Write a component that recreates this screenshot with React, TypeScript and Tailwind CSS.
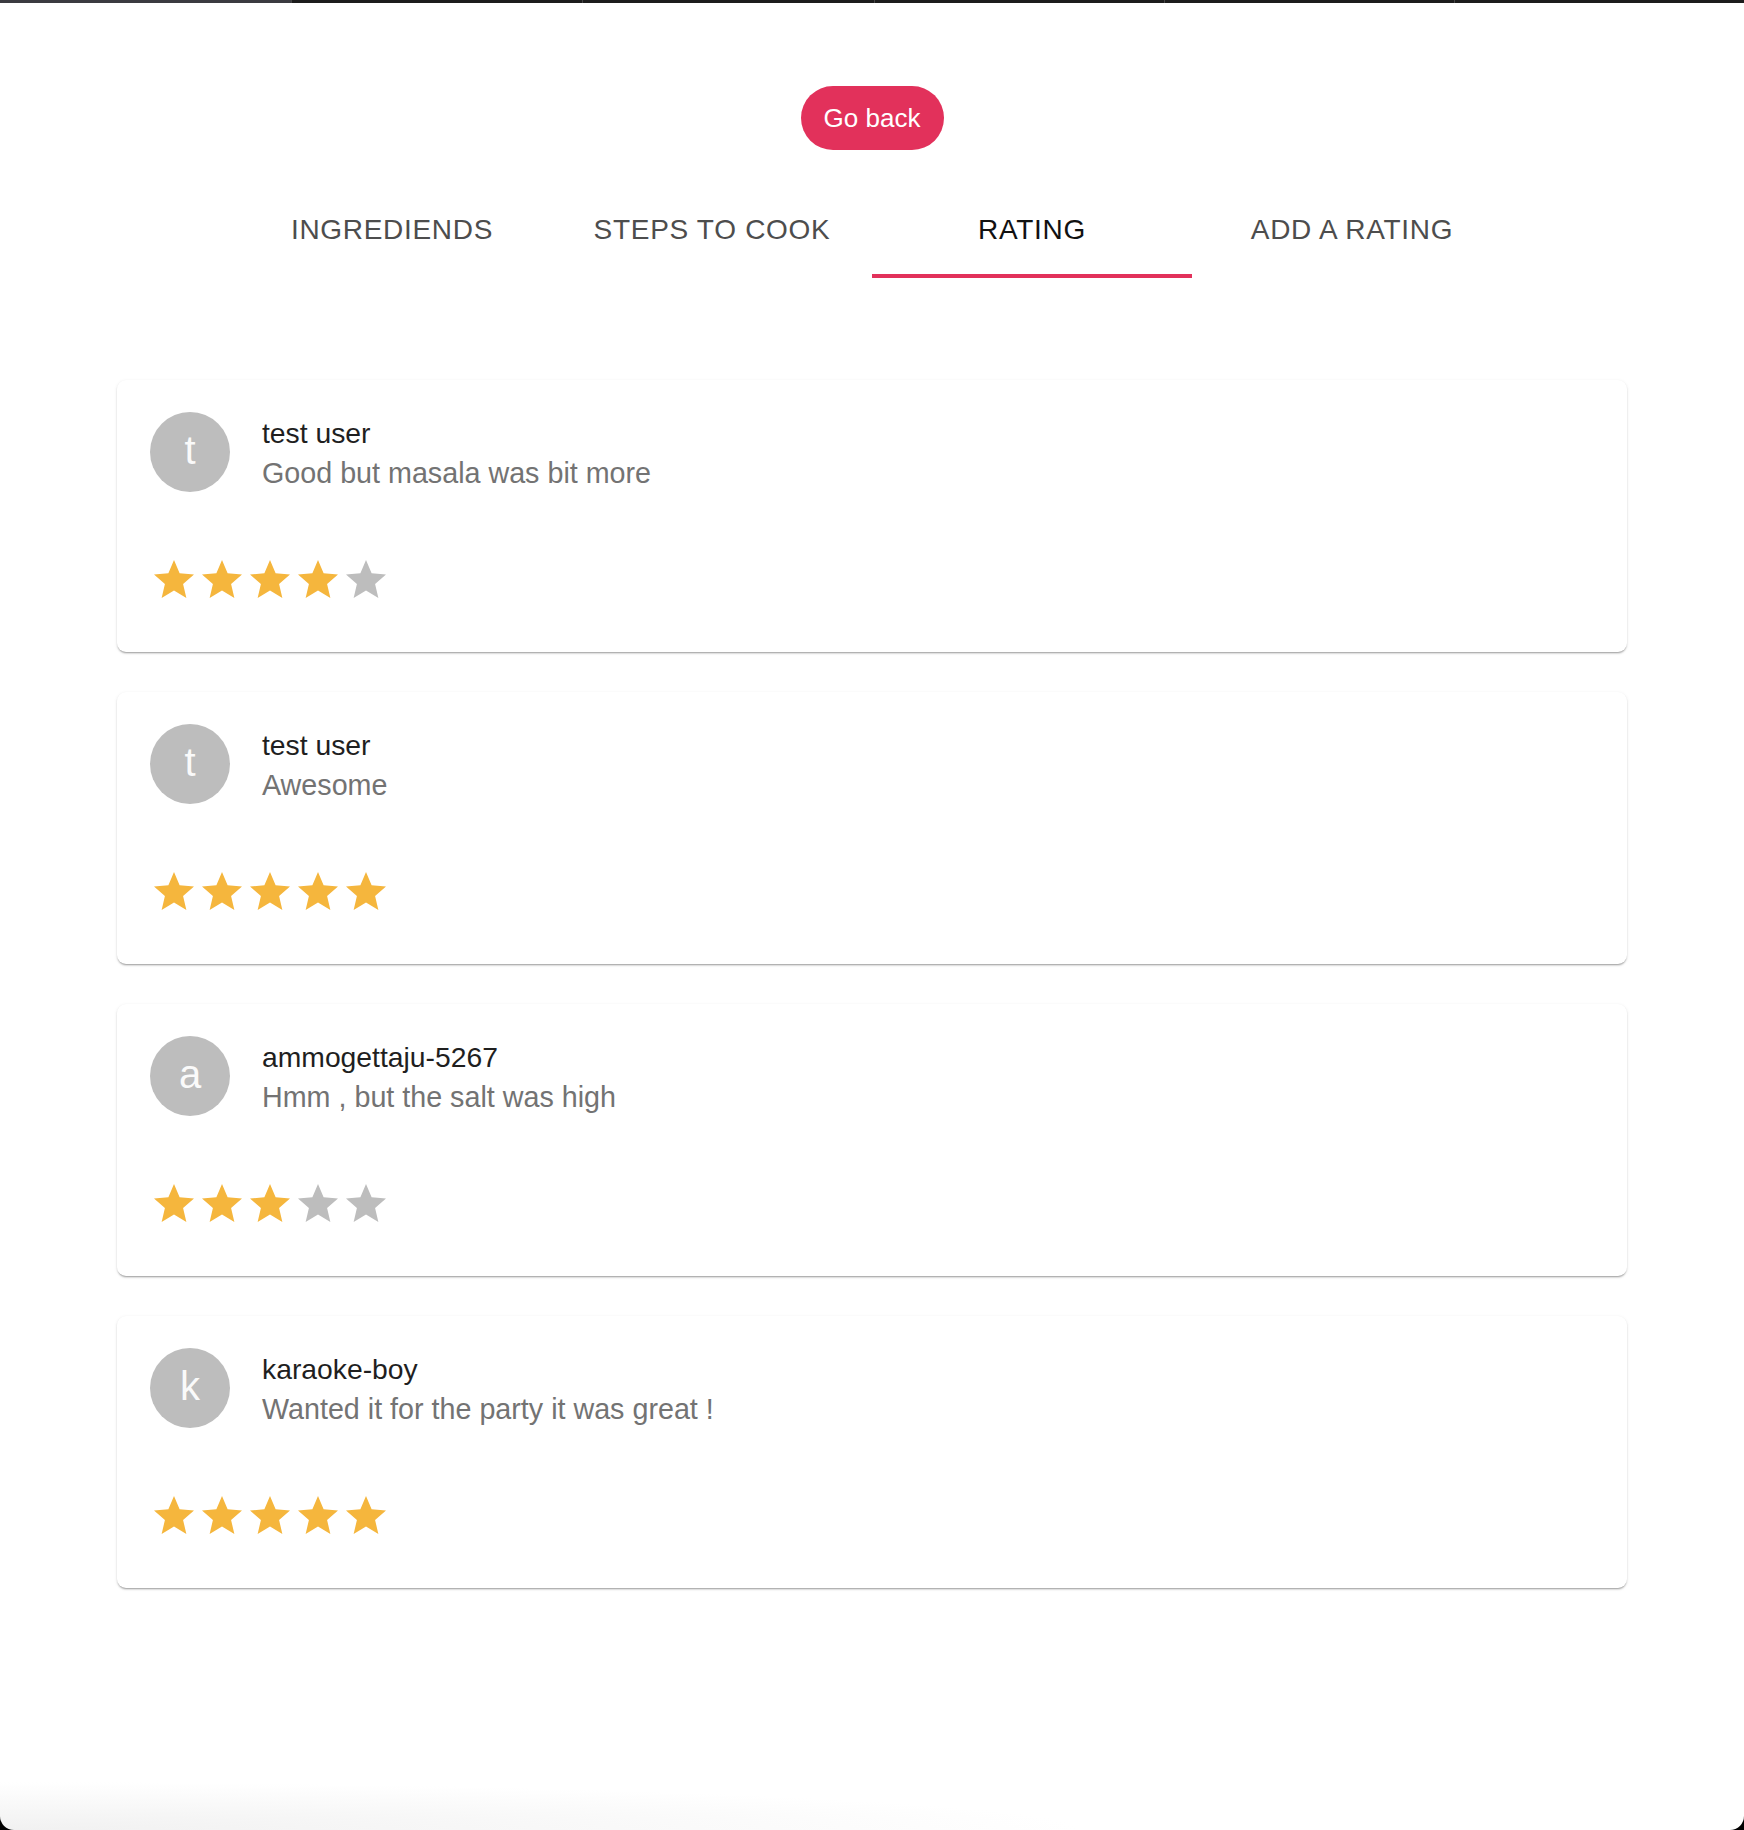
import React from "react";

const STAR = "M12 17.27L18.18 21l-1.64-7.03L22 9.24l-7.19-.61L12 2 9.19 8.63 2 9.24l5.46 4.73L5.82 21z";

type Review = { name: string; text: string; rating: number };

const reviews: Review[] = [
  { name: "test user", text: "Good but masala was bit more", rating: 4 },
  { name: "test user", text: "Awesome", rating: 5 },
  { name: "ammogettaju-5267", text: "Hmm , but the salt was high", rating: 3 },
  { name: "karaoke-boy", text: "Wanted it for the party it was great !", rating: 5 },
];

function Stars({ value }: { value: number }) {
  return (
    <div className="flex">
      {[1, 2, 3, 4, 5].map((i) => (
        <svg key={i} width="48" height="48" viewBox="0 0 24 24" className="block">
          <path d={STAR} fill={i <= value ? "#f5b63d" : "#bdbdbd"} />
        </svg>
      ))}
    </div>
  );
}

function ReviewCard({ r }: { r: Review }) {
  return (
    <div className="bg-white rounded-[9px] shadow-[0px_2px_2px_-1px_rgba(0,0,0,0.3),0px_1px_2px_0px_rgba(0,0,0,0.1),0px_1px_4px_0px_rgba(0,0,0,0.06)] h-[272px] pt-[32px] px-[33px]">
      <div className="flex items-start">
        <div className="w-[80px] h-[80px] rounded-full bg-[#bdbdbd] flex items-center justify-center text-[#fafafa] text-[40px] leading-none shrink-0">
          <span className="-mt-[4px]">{r.name.charAt(0)}</span>
        </div>
        <div className="ml-[32px]">
          <div className="text-[28.3px] leading-[42px] text-[#1f1f1f]">{r.name}</div>
          <div className="text-[28.7px] leading-[40px] -mt-[1px] text-[#737373]">{r.text}</div>
        </div>
      </div>
      <div className="mt-[63px]">
        <Stars value={r.rating} />
      </div>
    </div>
  );
}

const tabs = ["INGREDIENDS", "STEPS TO COOK", "RATING", "ADD A RATING"];

export default function App() {
  return (
    <div
      className="h-[1830px] bg-black flex flex-col"
      style={{ fontFamily: '"Liberation Sans", Arial, Helvetica, sans-serif' }}
    >
      <div className="h-[3px] flex shrink-0">
        <div className="w-[291px] bg-[#3b3b40]" />
        <div className="w-[291px] bg-[#1c1c1c] border-l border-[#444]" />
        <div className="w-[292px] bg-[#1c1c1c] border-l border-[#444]" />
        <div className="w-[290px] bg-[#1c1c1c] border-l border-[#444]" />
        <div className="w-[290px] bg-[#1c1c1c] border-l border-[#444]" />
        <div className="flex-1 bg-[#1c1c1c] border-l border-[#444]" />
      </div>
      <div className="flex-1 bg-white rounded-b-[14px] bg-[radial-gradient(62%_48px_at_0%_100%,#f1f1f1_0%,#ffffff_100%)] flex flex-col items-center">
        <button className="mt-[83px] h-[64px] w-[143px] rounded-full bg-[#e2315b] text-white text-[26px] flex items-center justify-center">
          Go back
        </button>
        <div className="mt-[32px] flex w-[1280px]">
          {tabs.map((t, i) => (
            <div
              key={t}
              className={
                i === 2
                  ? "w-[320px] h-[96px] flex items-center justify-center text-[28px] tracking-[0.7px] text-[#111] border-b-[4px] border-[#e2315b] pt-[4px]"
                  : "w-[320px] h-[96px] flex items-center justify-center text-[28px] tracking-[0.7px] text-[#4d4d4d] border-b-[4px] border-transparent pt-[4px]"
              }
            >
              {t}
            </div>
          ))}
        </div>
        <div className="mt-[102px] w-[1510px] flex flex-col gap-[40px]">
          {reviews.map((r, i) => (
            <ReviewCard key={i} r={r} />
          ))}
        </div>
      </div>
    </div>
  );
}
